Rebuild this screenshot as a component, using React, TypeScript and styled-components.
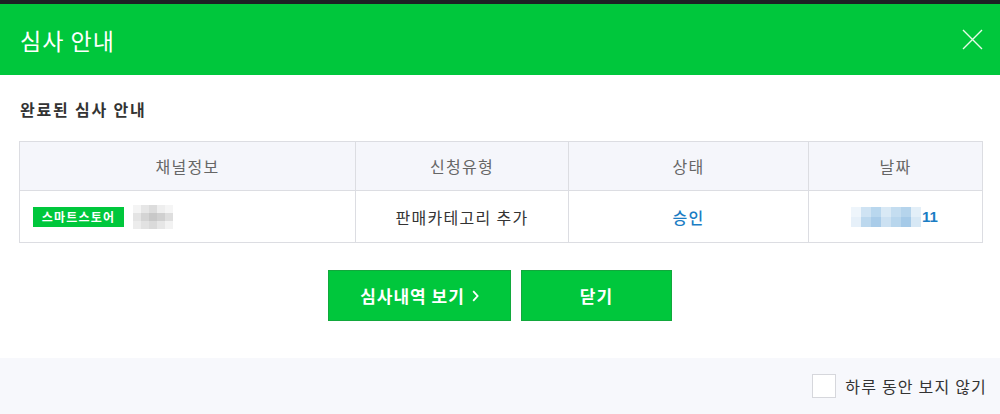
import React from "react";
import styled, { createGlobalStyle } from "styled-components";

const Global = createGlobalStyle`
  html, body { margin: 0; padding: 0; background: #ffffff; }
  body { font-family: "Noto Sans CJK KR", "Noto Sans", sans-serif; }
  * { box-sizing: border-box; }
`;

const Page = styled.div`
  width: 1000px;
  height: 414px;
  display: flex;
  flex-direction: column;
  overflow: hidden;
`;

const BackdropStrip = styled.div`
  height: 4px;
  background: #1d2124;
`;

const Header = styled.header`
  height: 71px;
  background: #00c73c;
  display: flex;
  align-items: center;
  justify-content: space-between;
  padding: 0 17px 0 20px;
`;

const Title = styled.h1`
  margin: 0;
  font-size: 23px;
  font-weight: 400;
  color: #ffffff;
  letter-spacing: 1px;
`;

const CloseButton = styled.button`
  width: 22px;
  height: 22px;
  padding: 0;
  border: 0;
  background: none;
  display: flex;
  align-items: center;
  justify-content: center;
  cursor: pointer;
`;

const Body = styled.main`
  flex: 1;
  background: #ffffff;
  padding: 23px 18px 0 19px;
  display: flex;
  flex-direction: column;
`;

const SubTitle = styled.h2`
  margin: 0 0 20px 1px;
  font-size: 16px;
  font-weight: 700;
  color: #333333;
  line-height: 23px;
  letter-spacing: 1.8px;
`;

const Table = styled.table`
  width: 963px;
  border-collapse: collapse;
  table-layout: fixed;
`;

const Th = styled.th<{ $w: number }>`
  width: ${(p) => p.$w}px;
  height: 49px;
  background: #f5f6fb;
  border: 1px solid #dcdde2;
  font-size: 16px;
  font-weight: 400;
  color: #666666;
  text-align: center;
  letter-spacing: 1.3px;
  padding: 0;
`;

const Td = styled.td<{ $align?: string }>`
  height: 52px;
  border: 1px solid #dcdde2;
  font-size: 16px;
  color: #333333;
  letter-spacing: 1.3px;
  text-align: ${(p) => p.$align || "center"};
  padding: 0;
`;

const ChannelCell = styled.div`
  display: flex;
  align-items: center;
  gap: 9px;
  padding-left: 13px;
`;

const Badge = styled.span`
  display: inline-flex;
  align-items: center;
  justify-content: center;
  width: 91px;
  height: 20px;
  background: #00c73c;
  color: #ffffff;
  font-size: 12px;
  font-weight: 700;
  letter-spacing: 1.2px;
`;

const Pixelated = styled.span<{ $cols: number; $cell: number }>`
  display: inline-grid;
  grid-template-columns: repeat(${(p) => p.$cols}, ${(p) => p.$cell}px);
  grid-auto-rows: ${(p) => p.$cell}px;
`;

const Pixel = styled.span<{ $c: string }>`
  background: ${(p) => p.$c};
`;

const Status = styled.span`
  color: #1b7dc4;
  font-weight: 500;
`;

const DateCell = styled.div`
  display: flex;
  align-items: center;
  justify-content: center;
  gap: 1px;
  padding-right: 2px;
`;

const DateText = styled.span`
  color: #1b7dc4;
  font-weight: 700;
  font-family: "Liberation Sans", Arial, sans-serif;
  font-size: 15px;
  letter-spacing: 0;
`;

const ButtonRow = styled.div`
  display: flex;
  justify-content: center;
  gap: 10px;
  margin-top: 27px;
  padding-right: 1px;
`;

const GreenButton = styled.button<{ $w: number }>`
  width: ${(p) => p.$w}px;
  height: 51px;
  background: #00c73c;
  border: 1px solid #12a83c;
  color: #ffffff;
  font-family: inherit;
  font-size: 17px;
  font-weight: 700;
  letter-spacing: 1px;
  display: inline-flex;
  align-items: center;
  justify-content: center;
  gap: 7px;
  cursor: pointer;
`;

const Footer = styled.footer`
  height: 56px;
  background: #f7f8fc;
  display: flex;
  align-items: center;
  justify-content: flex-end;
  padding: 0 13px 1px 0;
`;

const CheckLabel = styled.label`
  display: flex;
  align-items: center;
  gap: 9px;
  font-size: 16px;
  color: #333333;
  cursor: pointer;
  letter-spacing: 1.2px;
`;

const CheckBox = styled.span`
  width: 24px;
  height: 24px;
  background: #ffffff;
  border: 1px solid #d6d7dc;
`;

const nameBlur = [
  "#f4f4f4", "#e6e6e6", "#dcdcdc", "#eeeeee", "#f5f5f5",
  "#e4e4e4", "#d4d4d4", "#c8c8c8", "#d0d0d0", "#dedede",
  "#ececec", "#e2e2e2", "#dadada", "#e6e6e6", "#f2f2f2",
];

const dateBlur = [
  "#eef5fb", "#cfe3f3", "#b9d7ee", "#d9e9f5", "#c4ddf0", "#b5d4ec", "#e3eff8",
  "#e6f0f9", "#bcd8ee", "#a9cce9", "#cce1f2", "#b8d6ed", "#a5cae8", "#d7e8f5",
];

export default function App() {
  return (
    <>
      <Global />
      <Page>
        <BackdropStrip />
        <Header>
          <Title>심사 안내</Title>
          <CloseButton aria-label="닫기">
            <svg width="21" height="21" viewBox="0 0 21 21">
              <path d="M1 1 L20 20 M20 1 L1 20" stroke="#e8fbe9" strokeWidth="1.4" fill="none" />
            </svg>
          </CloseButton>
        </Header>
        <Body>
          <SubTitle>완료된 심사 안내</SubTitle>
          <Table>
            <thead>
              <tr>
                <Th $w={336}>채널정보</Th>
                <Th $w={213}>신청유형</Th>
                <Th $w={240}>상태</Th>
                <Th $w={174}>날짜</Th>
              </tr>
            </thead>
            <tbody>
              <tr>
                <Td $align="left">
                  <ChannelCell>
                    <Badge>스마트스토어</Badge>
                    <Pixelated $cols={5} $cell={8}>
                      {nameBlur.map((c, i) => (
                        <Pixel key={i} $c={c} />
                      ))}
                    </Pixelated>
                  </ChannelCell>
                </Td>
                <Td>판매카테고리 추가</Td>
                <Td>
                  <Status>승인</Status>
                </Td>
                <Td>
                  <DateCell>
                    <Pixelated $cols={7} $cell={10}>
                      {dateBlur.map((c, i) => (
                        <Pixel key={i} $c={c} />
                      ))}
                    </Pixelated>
                    <DateText>11</DateText>
                  </DateCell>
                </Td>
              </tr>
            </tbody>
          </Table>
          <ButtonRow>
            <GreenButton $w={183}>
              심사내역 보기
              <svg width="7" height="12" viewBox="0 0 7 12">
                <path d="M1.2 1.2 L5.6 6 L1.2 10.8" stroke="#ffffff" strokeWidth="1.8" fill="none" />
              </svg>
            </GreenButton>
            <GreenButton $w={151}>닫기</GreenButton>
          </ButtonRow>
        </Body>
        <Footer>
          <CheckLabel>
            <CheckBox />
            하루 동안 보지 않기
          </CheckLabel>
        </Footer>
      </Page>
    </>
  );
}
